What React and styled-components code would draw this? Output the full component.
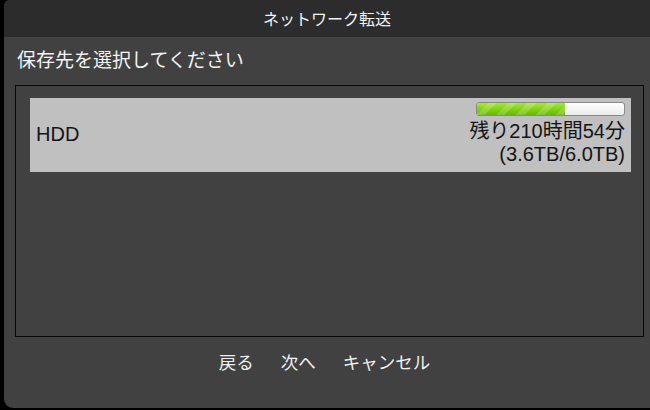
import styled, { createGlobalStyle } from 'styled-components';

const GlobalStyle = createGlobalStyle`
  html, body {
    margin: 0;
    padding: 0;
    background: #000;
    overflow: hidden;
  }
  body {
    font-family: "Noto Sans CJK JP", "Liberation Sans", sans-serif;
  }
`;

const Screen = styled.div`
  width: 650px;
  height: 410px;
  display: flex;
  align-items: flex-start;
  padding-left: 4px;
  box-sizing: border-box;
`;

const Dialog = styled.div`
  width: 646px;
  height: 408px;
  background: #414141;
  border-radius: 6px 0 0 9px;
  display: flex;
  flex-direction: column;
  overflow: hidden;
`;

const TitleBar = styled.div`
  height: 37px;
  flex-shrink: 0;
  background: #2c2c2c;
  color: #f4f4f4;
  font-size: 16px;
  line-height: 37px;
  text-align: center;
`;

const Body = styled.div`
  flex: 1;
  display: flex;
  flex-direction: column;
  padding: 10px 6px 0 11px;
`;

const Heading = styled.div`
  color: #f4f4f4;
  font-size: 19px;
  line-height: 24px;
  margin: 0 0 14px 2px;
`;

const Panel = styled.div`
  height: 252px;
  box-sizing: border-box;
  border: 1px solid #080808;
  padding: 12px 12px 0 14px;
`;

const DriveItem = styled.div`
  height: 74px;
  background: #c0c0c0;
  display: flex;
  justify-content: space-between;
  align-items: stretch;
  padding: 4px 6px 0 6px;
  box-sizing: border-box;
  color: #141414;
  font-family: "Liberation Sans", "Noto Sans CJK JP", sans-serif;
  font-size: 20px;
`;

const DriveName = styled.div`
  align-self: center;
  line-height: 23px;
  margin-top: -5px;
`;

const DriveInfo = styled.div`
  display: flex;
  flex-direction: column;
  align-items: flex-end;
  line-height: 23px;
`;

const Bar = styled.div`
  width: 147px;
  height: 12px;
  border: 1px solid #8a8a8a;
  border-radius: 3px;
  background: linear-gradient(#ffffff, #ececec);
  overflow: hidden;
  margin-bottom: 4px;
`;

const BarFill = styled.div`
  height: 100%;
  background:
    repeating-linear-gradient(
      135deg,
      rgba(255, 255, 255, 0) 0 8px,
      rgba(255, 255, 255, 0.18) 8px 14px
    ),
    linear-gradient(#a6e640, #7fd010 55%, #68b808);
`;

const InfoLine = styled.div`
  white-space: nowrap;
`;

const Footer = styled.div`
  display: flex;
  justify-content: center;
  gap: 27px;
  margin-top: 13px;
  padding-right: 10px;
`;

const FooterButton = styled.button`
  background: none;
  border: none;
  padding: 0;
  color: #f0f0f0;
  font-family: "Noto Sans CJK JP", sans-serif;
  font-size: 17.5px;
  line-height: 24px;
  cursor: pointer;
`;

const drive = { name: 'HDD', used: 3.6, total: 6.0, remaining: '残り210時間54分' };

export default function App() {
  const percent = (drive.used / drive.total) * 100;
  return (
    <>
      <GlobalStyle />
      <Screen>
        <Dialog>
          <TitleBar>ネットワーク転送</TitleBar>
          <Body>
            <Heading>保存先を選択してください</Heading>
            <Panel>
              <DriveItem>
                <DriveName>{drive.name}</DriveName>
                <DriveInfo>
                  <Bar>
                    <BarFill style={{ width: `${percent}%` }} />
                  </Bar>
                  <InfoLine>{drive.remaining}</InfoLine>
                  <InfoLine>
                    ({drive.used.toFixed(1)}TB/{drive.total.toFixed(1)}TB)
                  </InfoLine>
                </DriveInfo>
              </DriveItem>
            </Panel>
            <Footer>
              <FooterButton>戻る</FooterButton>
              <FooterButton>次へ</FooterButton>
              <FooterButton>キャンセル</FooterButton>
            </Footer>
          </Body>
        </Dialog>
      </Screen>
    </>
  );
}
